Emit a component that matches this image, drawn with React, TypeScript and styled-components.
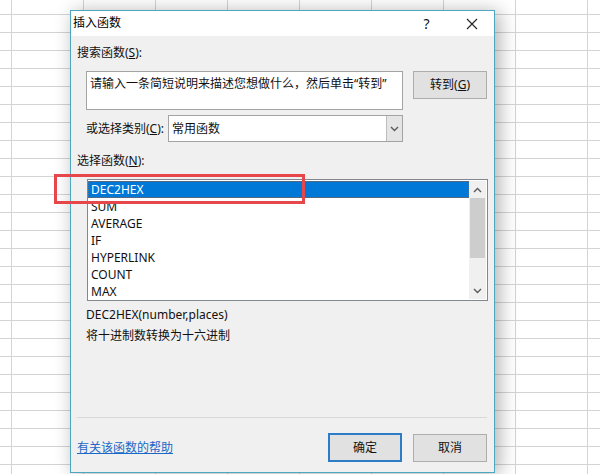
import React from "react";
import styled, { createGlobalStyle } from "styled-components";

const Global = createGlobalStyle`
  html, body { margin: 0; padding: 0; }
  body { font-family: "Noto Sans", "Noto Sans CJK SC", sans-serif; }
  * { box-sizing: border-box; }
`;

const Sheet = styled.div`
  width: 600px;
  height: 474px;
  overflow: hidden;
  padding: 10px 0 0 70px;
  background-color: #ffffff;
  background-image:
    linear-gradient(to right, #d4d4d4 1px, transparent 1px),
    linear-gradient(to bottom, #d4d4d4 1px, transparent 1px);
  background-size: 72px 18px;
  background-position: 11px 14px;
`;

const Dialog = styled.div`
  position: relative;
  width: 425px;
  height: 463px;
  border: 1px solid #4fa6bf;
  background: #f0f0f0;
  box-shadow: 4px 2px 18px rgba(0, 0, 0, 0.32);
  display: flex;
  flex-direction: column;
  font-size: 12px;
  color: #000;
`;

const TitleBar = styled.div`
  height: 25px;
  background: #ffffff;
  display: flex;
  align-items: center;
  padding-left: 2px;
`;

const Title = styled.div`
  flex: 1;
  font-size: 12px;
  line-height: 16px;
  margin-top: -1px;
`;

const TitleButton = styled.div`
  width: 45px;
  height: 25px;
  display: flex;
  align-items: center;
  justify-content: center;
  font-size: 14px;
  color: #111;
`;

const Body = styled.div`
  flex: 1;
  display: flex;
  flex-direction: column;
  padding: 0 7px 10px 6px;
`;

const Label = styled.div<{ $mt: number; $ml?: number }>`
  margin-top: ${(p) => p.$mt}px;
  margin-left: ${(p) => p.$ml ?? 0}px;
  line-height: 16px;
  height: 16px;
  white-space: nowrap;
  color: #111;
`;

const Row = styled.div<{ $mt: number }>`
  display: flex;
  align-items: flex-start;
  margin-top: ${(p) => p.$mt}px;
  padding-left: 9px;
`;

const SearchBox = styled.div`
  width: 317px;
  height: 39px;
  background: #fff;
  border: 1px solid #a3a3a3;
  padding: 4px 3px;
  line-height: 16px;
  white-space: nowrap;
  overflow: hidden;
  color: #111;
`;

const Button = styled.div<{ $default?: boolean }>`
  width: 74px;
  height: ${(p) => (p.$default ? 29 : 28)}px;
  background: #e1e1e1;
  border: ${(p) => (p.$default ? "2px solid #2c7cc7" : "1px solid #adadad")};
  display: flex;
  align-items: center;
  justify-content: center;
  color: #111;
  line-height: 16px;
`;

const Gap = styled.div<{ $w: number }>`
  width: ${(p) => p.$w}px;
  flex: none;
`;

const CatLabel = styled.div`
  width: 82px;
  height: 27px;
  line-height: 27px;
  white-space: nowrap;
  color: #111;
`;

const Select = styled.div`
  width: 235px;
  height: 27px;
  background: #fff;
  border: 1px solid #a3a3a3;
  display: flex;
`;

const SelectText = styled.div`
  flex: 1;
  padding-left: 3px;
  line-height: 25px;
  color: #111;
`;

const SelectArrow = styled.div`
  width: 16px;
  background: #e5e5e5;
  border-left: 1px solid #bdbdbd;
  display: flex;
  align-items: center;
  justify-content: center;
`;

const ListWrap = styled.div`
  position: relative;
  margin: 10px 0 0 10px;
  width: 401px;
  height: 122px;
`;

const ListBox = styled.div`
  width: 100%;
  height: 100%;
  background: #fff;
  border: 1px solid #828790;
  display: flex;
  padding: 1px 1px 1px 0;
`;

const Items = styled.div`
  flex: 1;
  overflow: hidden;
`;

const Item = styled.div<{ $sel?: boolean }>`
  height: 17px;
  line-height: 17px;
  padding-left: 3px;
  background: ${(p) => (p.$sel ? "#0078d7" : "transparent")};
  color: ${(p) => (p.$sel ? "#fff" : "#111")};
  outline: ${(p) => (p.$sel ? "1px dotted #5a6f86" : "none")};
  outline-offset: -1px;
  white-space: nowrap;
`;

const ScrollBar = styled.div`
  width: 17px;
  background: #f0f0f0;
  display: flex;
  flex-direction: column;
`;

const ScrollArrow = styled.div`
  height: 17px;
  display: flex;
  align-items: center;
  justify-content: center;
`;

const ScrollTrack = styled.div`
  flex: 1;
  display: flex;
  flex-direction: column;
`;

const Thumb = styled.div`
  height: 60px;
  margin: 0 1px;
  background: #cdcdcd;
`;

const Highlight = styled.div`
  position: absolute;
  left: -33px;
  top: -5px;
  width: 251px;
  height: 30px;
  border: 3px solid #e5474b;
  pointer-events: none;
`;

const Info = styled.div<{ $mt: number }>`
  margin-top: ${(p) => p.$mt}px;
  padding-left: 9px;
  line-height: 16px;
  color: #111;
`;

const Spacer = styled.div`
  flex: 1;
`;

const Separator = styled.div`
  height: 1px;
  background: #d9d9d9;
`;

const Footer = styled.div`
  margin-top: 15px;
  display: flex;
  align-items: center;
`;

const HelpLink = styled.a`
  color: #1a68c7;
  text-decoration: underline;
  line-height: 16px;
  flex: 1;
`;

const Chevron = ({ dir }: { dir: "up" | "down" }) => (
  <svg width="9" height="6" viewBox="0 0 9 6">
    <path
      d={dir === "up" ? "M1 5 L4.5 1.5 L8 5" : "M1 1 L4.5 4.5 L8 1"}
      fill="none"
      stroke="#5a5a5a"
      strokeWidth="1.4"
    />
  </svg>
);

const funcs = ["DEC2HEX", "SUM", "AVERAGE", "IF", "HYPERLINK", "COUNT", "MAX"];

export default function App() {
  return (
    <>
      <Global />
      <Sheet>
        <Dialog>
          <TitleBar>
            <Title>插入函数</Title>
            <TitleButton>?</TitleButton>
            <TitleButton>
              <svg width="12" height="12" viewBox="0 0 12 12">
                <path d="M1 1 L11 11 M11 1 L1 11" stroke="#222" strokeWidth="1.1" />
              </svg>
            </TitleButton>
          </TitleBar>
          <Body>
            <Label $mt={9}>
              搜索函数(<u>S</u>):
            </Label>
            <Row $mt={10}>
              <SearchBox>请输入一条简短说明来描述您想做什么，然后单击“转到”</SearchBox>
              <Gap $w={10} />
              <Button>
                转到(<u>G</u>)
              </Button>
            </Row>
            <Row $mt={5}>
              <CatLabel>
                或选择类别(<u>C</u>):
              </CatLabel>
              <Select>
                <SelectText>常用函数</SelectText>
                <SelectArrow>
                  <Chevron dir="down" />
                </SelectArrow>
              </Select>
            </Row>
            <Label $mt={11}>
              选择函数(<u>N</u>):
            </Label>
            <ListWrap>
              <ListBox>
                <Items>
                  {funcs.map((f, i) => (
                    <Item key={f} $sel={i === 0}>
                      {f}
                    </Item>
                  ))}
                </Items>
                <ScrollBar>
                  <ScrollArrow>
                    <Chevron dir="up" />
                  </ScrollArrow>
                  <ScrollTrack>
                    <Thumb />
                  </ScrollTrack>
                  <ScrollArrow>
                    <Chevron dir="down" />
                  </ScrollArrow>
                </ScrollBar>
              </ListBox>
              <Highlight />
            </ListWrap>
            <Info $mt={6}>DEC2HEX(number,places)</Info>
            <Info $mt={5}>将十进制数转换为十六进制</Info>
            <Spacer />
            <Separator />
            <Footer>
              <HelpLink href="#">有关该函数的帮助</HelpLink>
              <Button $default>确定</Button>
              <Gap $w={11} />
              <Button>取消</Button>
            </Footer>
          </Body>
        </Dialog>
      </Sheet>
    </>
  );
}
